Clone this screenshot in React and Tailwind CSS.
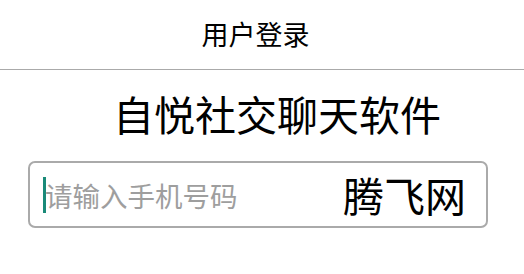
import React from "react";

export default function App() {
  return (
    <div
      className="w-[524px] h-[274px] bg-white text-black"
      style={{ fontFamily: '"Noto Sans CJK SC", "Noto Sans", sans-serif' }}
    >
      <div className="h-[70px] border-b border-[#aaaaaa] flex items-center justify-center pr-[13px] pb-[2px]">
        <span className="text-[27px] leading-[27px]">用户登录</span>
      </div>
      <div className="flex justify-center pl-[30px] pt-[23px]">
        <h1 className="text-[41px] leading-[41px] font-normal">自悦社交聊天软件</h1>
      </div>
      <div className="mt-[27px] ml-[28px] w-[460px] h-[67px] border-2 border-[#aaaaaa] rounded-[7px] flex items-center pl-[13px] pr-[20px]">
        <div className="flex items-center flex-1">
          <span className="w-[3px] h-[36px] bg-[#1a8a78]"></span>
          <span className="text-[27.5px] leading-[28px] text-[#9e9e9e] -ml-[1px]">请输入手机号码</span>
        </div>
        <span className="text-[41px] leading-[41px]">腾飞网</span>
      </div>
    </div>
  );
}
